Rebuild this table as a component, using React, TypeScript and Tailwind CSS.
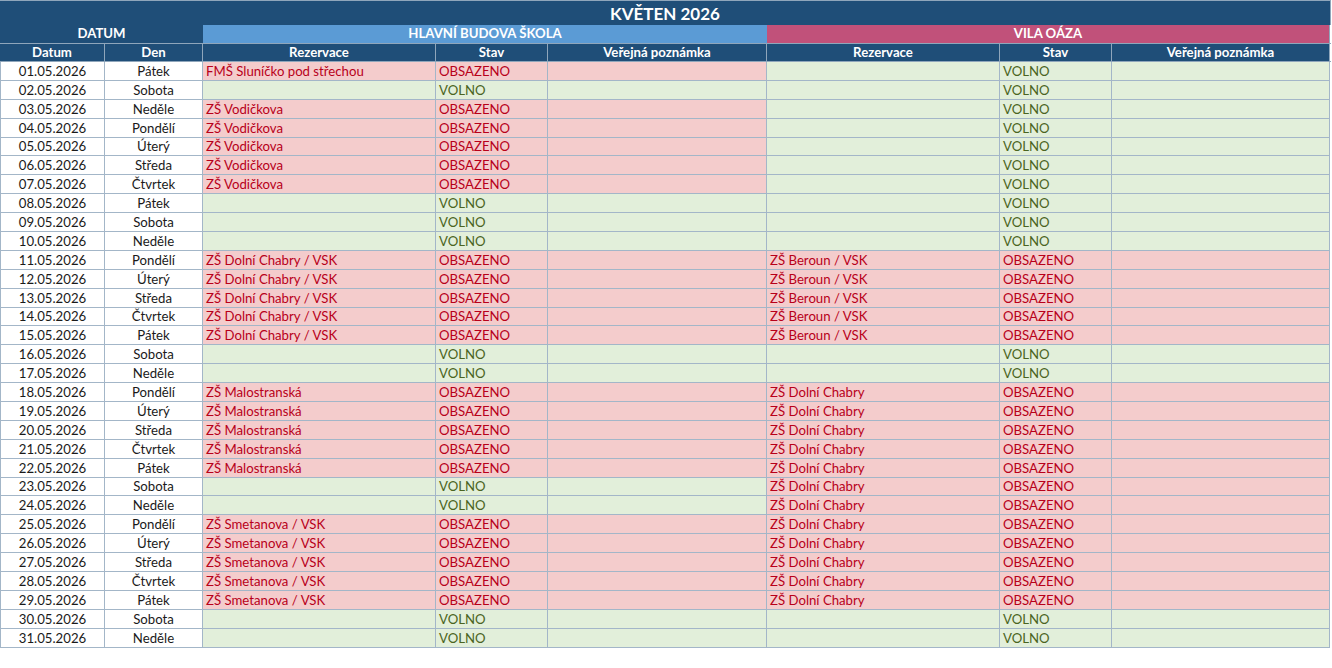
import React from "react";

const DAYS = ["Pondělí", "Úterý", "Středa", "Čtvrtek", "Pátek", "Sobota", "Neděle"];

const hlavni = (d: number): string => {
  if (d === 1) return "FMŠ Sluníčko pod střechou";
  if (d >= 3 && d <= 7) return "ZŠ Vodičkova";
  if (d >= 11 && d <= 15) return "ZŠ Dolní Chabry / VSK";
  if (d >= 18 && d <= 22) return "ZŠ Malostranská";
  if (d >= 25 && d <= 29) return "ZŠ Smetanova / VSK";
  return "";
};

const vila = (d: number): string => {
  if (d >= 11 && d <= 15) return "ZŠ Beroun / VSK";
  if (d >= 18 && d <= 29) return "ZŠ Dolní Chabry";
  return "";
};

const rows = Array.from({ length: 31 }, (_, i) => {
  const d = i + 1;
  return {
    date: `${String(d).padStart(2, "0")}.05.2026`,
    day: DAYS[(d + 3) % 7],
    a: hlavni(d),
    b: vila(d),
  };
});

const cols =
  "grid grid-cols-[105px_98px_233px_112px_219px_233px_112px_218px]";

const Building = ({ name }: { name: string }) => {
  const busy = name !== "";
  const bg = busy ? "bg-[#f4cccc]" : "bg-[#e2efda]";
  return (
    <>
      <div className={`${bg} border-r border-b border-[#a3b6c8] pl-[3px] pt-[1px] text-[#b8001a] truncate`}>
        {name}
      </div>
      <div
        className={`${bg} border-r border-b border-[#a3b6c8] pl-[3px] pt-[1px] ${
          busy ? "text-[#b8001a]" : "text-[#4b6421]"
        }`}
      >
        {busy ? "OBSAZENO" : "VOLNO"}
      </div>
      <div className={`${bg} border-r border-b border-[#a3b6c8]`} />
    </>
  );
};

const HeadCell = ({ label }: { label: string }) => (
  <div className="bg-[#1f4e78] border-r border-[#8fa6bb] flex items-center justify-center">
    {label}
  </div>
);

export default function App() {
  return (
    <div className="bg-white w-[1332px] h-[668px] font-['Lato',sans-serif] text-[13.2px] leading-none">
      <div className="w-[1331px] border-t border-[#8fa6bb]">
        <div className="bg-[#1f4e78] h-[24px] flex items-center justify-center text-white font-bold text-[17px] border-r border-[#8fa6bb]">
          KVĚTEN 2026
        </div>
        <div className={`${cols} h-[18px] text-white font-bold`}>
          <div className="col-span-2 bg-[#1f4e78] flex items-center justify-center">DATUM</div>
          <div className="col-span-3 bg-[#5b9bd5] flex items-center justify-center">
            HLAVNÍ BUDOVA ŠKOLA
          </div>
          <div className="col-span-3 bg-[#c1517a] flex items-center justify-center border-r border-[#8fa6bb]">
            VILA OÁZA
          </div>
        </div>
        <div className={`${cols} h-[19px] text-white font-bold border-t border-b border-[#8fa6bb]`}>
          <HeadCell label="Datum" />
          <HeadCell label="Den" />
          <HeadCell label="Rezervace" />
          <HeadCell label="Stav" />
          <HeadCell label="Veřejná poznámka" />
          <HeadCell label="Rezervace" />
          <HeadCell label="Stav" />
          <HeadCell label="Veřejná poznámka" />
        </div>
        {rows.map((r) => (
          <div key={r.date} className={`${cols} h-[18.9px] [&>div]:flex [&>div]:items-center`}>
            <div className="border-l border-r border-b border-[#a3b6c8] justify-center pt-[1px] text-[#1a1a1a]">
              {r.date}
            </div>
            <div className="border-r border-b border-[#a3b6c8] justify-center pt-[1px] text-[#1a1a1a]">
              {r.day}
            </div>
            <Building name={r.a} />
            <Building name={r.b} />
          </div>
        ))}
      </div>
    </div>
  );
}
